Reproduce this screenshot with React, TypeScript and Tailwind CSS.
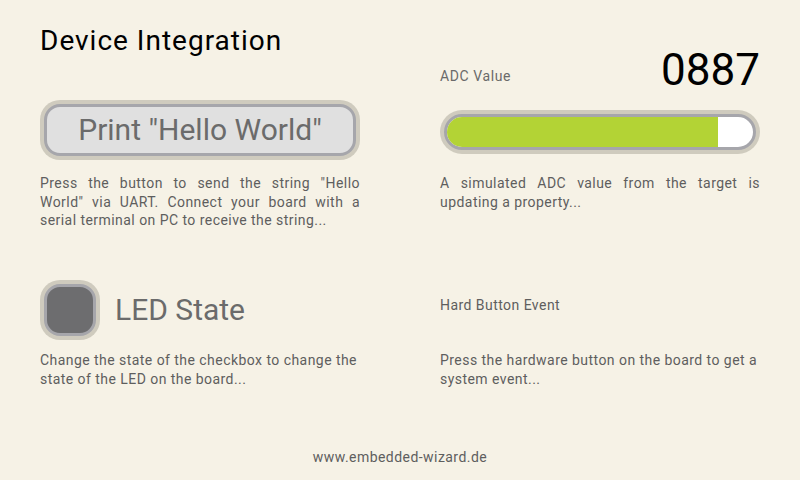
import React from "react";

const font = { fontFamily: "Roboto, 'Noto Sans', sans-serif" };

export default function App() {
  const value = 887;
  return (
    <div
      className="w-[800px] h-[480px] bg-[#f6f2e6] flex flex-col overflow-hidden"
      style={font}
    >
      <div className="flex gap-[80px] px-[40px]">
        {/* Left column */}
        <div className="w-[320px] flex flex-col">
          <div className="mt-[27px] h-[28px] text-[28px] leading-[28px] tracking-[1px] text-black">
            Device Integration
          </div>
          <div className="mt-[45px] h-[60px] w-[320px] rounded-[20px] bg-[#cfcbbe] p-[4px]">
            <div className="h-full w-full rounded-[16px] border-[3px] border-[#a6a6ab] bg-[#e0e0e0] flex items-center justify-center text-[30px] leading-none text-[#6b6b6b]">
              Print "Hello World"
            </div>
          </div>
          <p className="mt-[14px] text-[14px] leading-[18.5px] tracking-[0.45px] text-[#5e5e5e] text-justify">
            Press the button to send the string "Hello World" via UART. Connect your board with a serial terminal on PC to receive the string...
          </p>
          <div className="mt-[50px] flex items-center h-[60px]">
            <div className="h-[60px] w-[60px] rounded-[20px] bg-[#cfcbbe] p-[4px]">
              <div className="h-full w-full rounded-[16px] border-[3px] border-[#a6a6ab] bg-[#6d6d6f]" />
            </div>
            <div className="ml-[15px] text-[30px] leading-none text-[#6b6b6b]">LED State</div>
          </div>
          <p className="mt-[11px] text-[14px] leading-[19px] tracking-[0.45px] text-[#5e5e5e]">
            Change the state of the checkbox to change the state of the LED on the board...
          </p>
        </div>
        {/* Right column */}
        <div className="w-[320px] flex flex-col">
          <div className="mt-[48px] h-[44px] flex justify-between items-start">
            <div className="mt-[19px] text-[14px] leading-[18px] tracking-[0.6px] text-[#6a6a6a]">ADC Value</div>
            <div className="text-[44px] leading-[44px] text-black">0887</div>
          </div>
          <div className="mt-[18px] h-[44px] w-[320px] rounded-full bg-[#cfcbbe] p-[4px]">
            <div className="h-full w-full rounded-full border-[3px] border-[#a6a6ab] bg-white overflow-hidden">
              <div
                className="h-full bg-[#b3d335]"
                style={{ width: `${(value / 1000) * 100}%` }}
              />
            </div>
          </div>
          <p className="mt-[20px] text-[14px] leading-[18.5px] tracking-[0.45px] text-[#5e5e5e] text-justify">
            A simulated ADC value from the target is updating a property...
          </p>
          <div className="mt-[85px] text-[14px] leading-[18px] tracking-[0.45px] text-[#5e5e5e]">Hard Button Event</div>
          <p className="mt-[37px] text-[14px] leading-[19px] tracking-[0.45px] text-[#5e5e5e]">
            Press the hardware button on the board to get a system event...
          </p>
        </div>
      </div>
      <div className="mt-auto mb-[14px] text-center text-[14px] leading-[18px] tracking-[0.45px] text-[#5e5e5e]">
        www.embedded-wizard.de
      </div>
    </div>
  );
}
